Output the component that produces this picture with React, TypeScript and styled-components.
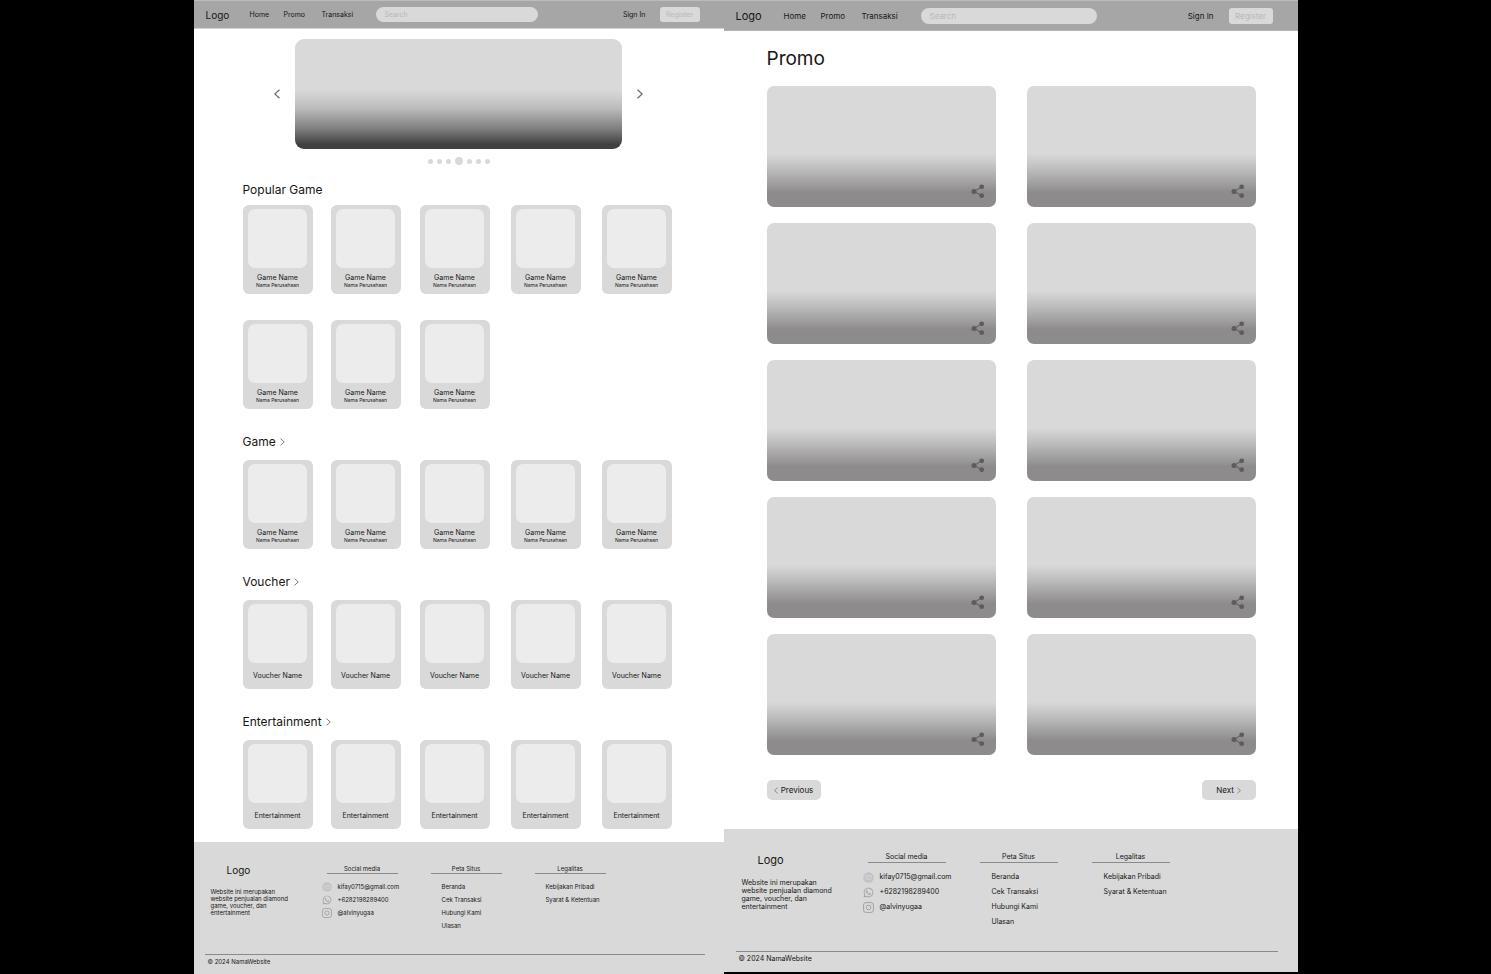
import React from "react";
import styled, { createGlobalStyle, ThemeProvider } from "styled-components";
import { FaWhatsapp } from "react-icons/fa";

const GlobalStyle = createGlobalStyle`
  *, *::before, *::after { box-sizing: border-box; }
  body { margin: 0; background: #000; color: #161616; font-family: Inter, "Liberation Sans", sans-serif; }
  h1, h2, h3, p, ul { margin: 0; padding: 0; font-weight: 400; }
  ul { list-style: none; }
  a { color: inherit; text-decoration: none; }
  button, input { font-family: inherit; border: 0; padding: 0; margin: 0; }
  button { cursor: pointer; }
`;

const compact = {
  header: { height: 29, edge: "#d2d2d2", left: 12, right: 24, logo: 10, text: 7, logoCol: 44, nav: "34px 38px 54px", control: 15, search: 162, inputPad: 9, button: 40, gap: 14 },
  footer: { top: 23, bottom: 9, left: 17, about: 116, pitch: 104, rule: 71, logo: 10, logoLine: 10, aboutGap: 13, text: 6, line: 7, row: 13, icon: 10, iconGap: 6, listGap: 9, indent: 11, bottomTop: 19, inset: 11, end: 19 },
};
const wide: typeof compact = {
  header: { height: 31, edge: "#b4b4b4", left: 12, right: 25, logo: 11, text: 8, logoCol: 48, nav: "37px 41px 59px", control: 16, search: 176, inputPad: 9, button: 44, gap: 15 },
  footer: { top: 24, bottom: 9, left: 18, about: 126, pitch: 112, rule: 78, logo: 11, logoLine: 14, aboutGap: 12, text: 7, line: 8, row: 15, icon: 11, iconGap: 6, listGap: 10, indent: 12, bottomTop: 18, inset: 12, end: 20 },
};
type Scale = typeof compact;
declare module "styled-components" {
  export interface DefaultTheme extends Scale {}
}

const Boards = styled.div`
  display: grid;
  grid-template-columns: 530fr 574fr;
  align-items: start;
  max-width: 1104px;
  margin: 0 auto;
`;
const Page = styled.div`
  background: #fff;
`;

/* Header */
const Header = styled.header`
  display: flex;
  align-items: center;
  height: ${(p) => p.theme.header.height}px;
  padding: 0 ${(p) => p.theme.header.right}px 0 ${(p) => p.theme.header.left}px;
  background: #a6a6a6;
  border-top: 1px solid #bcbcbc;
  border-bottom: 1px solid ${(p) => p.theme.header.edge};
  font-size: ${(p) => p.theme.header.text}px;
`;
const Brand = styled.a`
  width: ${(p) => p.theme.header.logoCol}px;
  font-size: ${(p) => p.theme.header.logo}px;
`;
const Nav = styled.nav`
  display: grid;
  grid-template-columns: ${(p) => p.theme.header.nav};
`;
const Search = styled.input`
  flex: 0 1 ${(p) => p.theme.header.search}px;
  min-width: 0;
  height: ${(p) => p.theme.header.control}px;
  padding: 0 ${(p) => p.theme.header.inputPad}px;
  border-radius: 8px;
  background: #d9d9d9;
  font-size: ${(p) => p.theme.header.text}px;
  &::placeholder { color: #b8b8b8; opacity: 1; }
`;
const Account = styled.div`
  display: flex;
  align-items: center;
  gap: ${(p) => p.theme.header.gap}px;
  margin-left: auto;
`;
const Register = styled.button`
  width: ${(p) => p.theme.header.button}px;
  height: ${(p) => p.theme.header.control}px;
  border-radius: 3px;
  background: #d9d9d9;
  color: #b8b8b8;
  font-size: ${(p) => p.theme.header.text}px;
`;

/* Carousel */
const Carousel = styled.section`
  display: flex;
  align-items: center;
  justify-content: center;
  gap: 15px;
  padding-top: 10px;
`;
const Slide = styled.div`
  flex: 0 1 327px;
  height: 110px;
  border-radius: 9px;
  background: linear-gradient(#d9d9d9 46%, #bcbcbc 63%, #7d7d7d 82%, #404040 96%);
`;
const IconButton = styled.button`
  display: flex;
  background: none;
  color: #666;
`;
const Dots = styled.div`
  display: flex;
  align-items: center;
  justify-content: center;
  gap: 4px;
  height: 8px;
  margin-top: 8px;
`;
const Dot = styled.button<{ $active: boolean }>`
  width: ${(p) => (p.$active ? 8 : 5)}px;
  height: ${(p) => (p.$active ? 8 : 5)}px;
  border-radius: 50%;
  background: #d9d9d9;
`;

/* Catalogue */
const Catalogue = styled.main`
  display: grid;
  gap: 25px;
  padding: 17px 52px 13px 49px;
`;
const SectionTitle = styled.h2<{ $gap: number }>`
  display: flex;
  align-items: center;
  gap: 4px;
  height: 16px;
  margin-bottom: ${(p) => p.$gap}px;
  font-size: 12px;
  line-height: 16px;
  svg { color: #777; }
`;
const CardGrid = styled.div`
  display: grid;
  grid-template-columns: 88fr 89fr 91fr 91fr 70fr;
  row-gap: 26px;
`;
const Card = styled.a`
  display: flex;
  flex-direction: column;
  align-items: center;
  width: 70px;
  height: 89px;
  padding-top: 4px;
  border-radius: 6px;
  background: #d9d9d9;
`;
const Thumb = styled.div`
  width: 59px;
  height: 59px;
  border-radius: 7px;
  background: #ececec;
`;
const CardName = styled.span<{ $alone: boolean }>`
  margin-top: ${(p) => (p.$alone ? 8 : 5)}px;
  font-size: 7px;
  line-height: 9px;
  white-space: nowrap;
`;
const CardMaker = styled.span`
  font-size: 5px;
  line-height: 6px;
`;

/* Promo */
const PromoMain = styled.main`
  padding: 16px 42px 29px 43px;
`;
const PromoTitle = styled.h1`
  margin-bottom: 15px;
  font-size: 19px;
  line-height: 24px;
`;
const PromoGrid = styled.div`
  display: grid;
  grid-template-columns: 1fr 1fr;
  gap: 16px 31px;
`;
const PromoCard = styled.article`
  display: flex;
  align-items: flex-end;
  justify-content: flex-end;
  height: 121px;
  padding: 0 11px 8px 0;
  border-radius: 7px;
  background: linear-gradient(#d9d9d9 56%, #bababa 70%, #8e8b8c 88%);
`;
const ShareButton = styled(IconButton)`
  color: #5c5c5c;
`;
const Pager = styled.nav`
  display: flex;
  justify-content: space-between;
  margin-top: 25px;
`;
const PagerButton = styled.button`
  display: flex;
  align-items: center;
  justify-content: center;
  gap: 3px;
  width: 54px;
  height: 20px;
  border-radius: 5px;
  background: #d9d9d9;
  color: #161616;
  font-size: 8px;
  svg { color: #777; }
`;

/* Footer */
const Footer = styled.footer`
  padding: ${(p) => p.theme.footer.top}px 0 ${(p) => p.theme.footer.bottom}px;
  background: #d9d9d9;
  font-size: ${(p) => p.theme.footer.text}px;
  line-height: ${(p) => p.theme.footer.line}px;
`;
const FooterColumns = styled.div`
  display: grid;
  grid-template-columns: ${(p) => `${p.theme.footer.about}px repeat(3, ${p.theme.footer.pitch}px)`};
  padding-left: ${(p) => p.theme.footer.left}px;
`;
const FooterLogo = styled.p`
  padding-left: 16px;
  margin-bottom: ${(p) => p.theme.footer.aboutGap}px;
  font-size: ${(p) => p.theme.footer.logo}px;
  line-height: ${(p) => p.theme.footer.logoLine}px;
`;
const About = styled.p`
  white-space: pre-line;
`;
const ColumnTitle = styled.h3`
  width: ${(p) => p.theme.footer.rule}px;
  padding-bottom: 1px;
  border-bottom: 1px solid #8a8a8a;
  font-size: inherit;
  text-align: center;
`;
const List = styled.ul<{ $indent: boolean }>`
  margin-top: ${(p) => p.theme.footer.listGap}px;
  padding-left: ${(p) => (p.$indent ? p.theme.footer.indent : 0)}px;
  margin-left: ${(p) => (p.$indent ? 0 : -5)}px;
`;
const Item = styled.li`
  height: ${(p) => p.theme.footer.row}px;
  a {
    display: inline-flex;
    align-items: center;
    gap: ${(p) => p.theme.footer.iconGap}px;
    height: ${(p) => p.theme.footer.line}px;
    white-space: nowrap;
  }
  svg {
    width: ${(p) => p.theme.footer.icon}px;
    height: ${(p) => p.theme.footer.icon}px;
    color: #a0a0a0;
  }
`;
const Copyright = styled.p`
  margin: ${(p) => p.theme.footer.bottomTop}px ${(p) => p.theme.footer.end}px 0 ${(p) => p.theme.footer.inset}px;
  padding: 3px 0 0 3px;
  border-top: 1px solid #8a8a8a;
`;

const Chevron = ({ left = false, w = 6, h = 10 }: { left?: boolean; w?: number; h?: number }) => (
  <svg width={w} height={h} viewBox="0 0 6 10" fill="none" stroke="currentColor" strokeWidth="1.2" aria-hidden="true">
    <path d={left ? "M5.5 .8 .8 5l4.7 4.2" : "M.5.8 5.2 5 .5 9.2"} />
  </svg>
);
const ShareIcon = () => (
  <svg width="14" height="15" viewBox="0 0 14 15" fill="currentColor" aria-hidden="true">
    <path d="M10.8 2.8 3 7.4l7.8 4.4" fill="none" stroke="currentColor" strokeWidth="1" />
    <circle cx="10.7" cy="2.8" r="2.4" />
    <circle cx="3" cy="7.4" r="2.5" />
    <circle cx="10.7" cy="11.7" r="2.4" />
  </svg>
);
const MailIcon = () => (
  <svg viewBox="0 0 20 20" aria-hidden="true">
    <circle cx="10" cy="10" r="9.5" fill="#c2c2c2" />
    <rect x="5" y="6.3" width="10" height="7.6" rx="1.2" fill="none" stroke="#dadada" strokeWidth="1.2" />
    <path d="m5.4 7.6 4.6 3.2 4.6-3.2" fill="none" stroke="#dadada" strokeWidth="1.2" />
  </svg>
);
const InstagramIcon = () => (
  <svg viewBox="0 0 20 20" fill="none" stroke="currentColor" strokeWidth="1.7" aria-hidden="true">
    <rect x="1" y="1" width="18" height="18" rx="4.5" />
    <circle cx="10" cy="10" r="4.2" />
    <circle cx="15" cy="5" r="0.7" fill="currentColor" stroke="none" />
  </svg>
);

const SiteHeader = () => (
  <Header>
    <Brand href="#">Logo</Brand>
    <Nav>
      <a href="#">Home</a>
      <a href="#">Promo</a>
      <a href="#">Transaksi</a>
    </Nav>
    <Search type="search" placeholder="Search" aria-label="Search" />
    <Account>
      <a href="#">Sign In</a>
      <Register type="button">Register</Register>
    </Account>
  </Header>
);

const columns = [
  {
    title: "Social media",
    items: [
      { text: "kifay0715@gmail.com", icon: <MailIcon /> },
      { text: "+6282198289400", icon: <FaWhatsapp /> },
      { text: "@alvinyugaa", icon: <InstagramIcon /> },
    ],
  },
  { title: "Peta Situs", items: [{ text: "Beranda" }, { text: "Cek Transaksi" }, { text: "Hubungi Kami" }, { text: "Ulasan" }] },
  { title: "Legalitas", items: [{ text: "Kebijakan Pribadi" }, { text: "Syarat & Ketentuan" }] },
] as { title: string; items: { text: string; icon?: React.ReactNode }[] }[];

const SiteFooter = () => (
  <Footer>
    <FooterColumns>
      <div>
        <FooterLogo>Logo</FooterLogo>
        <About>{"Website ini merupakan\nwebsite penjualan diamond\ngame, voucher, dan\nentertainment"}</About>
      </div>
      {columns.map((c) => (
        <div key={c.title}>
          <ColumnTitle>{c.title}</ColumnTitle>
          <List $indent={!c.items[0].icon}>
            {c.items.map((i) => (
              <Item key={i.text}>
                <a href="#">
                  {i.icon}
                  {i.text}
                </a>
              </Item>
            ))}
          </List>
        </div>
      ))}
    </FooterColumns>
    <Copyright>© 2024 NamaWebsite</Copyright>
  </Footer>
);

const sections = [
  { title: "Popular Game", name: "Game Name", maker: "Nama Perusahaan", count: 8, more: false },
  { title: "Game", name: "Game Name", maker: "Nama Perusahaan", count: 5, more: true },
  { title: "Voucher", name: "Voucher Name", maker: "", count: 5, more: true },
  { title: "Entertainment", name: "Entertainment", maker: "", count: 5, more: true },
];

const HomePage = () => (
  <Page>
    <SiteHeader />
    <Carousel aria-label="Banner">
      <IconButton type="button" aria-label="Previous banner"><Chevron left /></IconButton>
      <Slide />
      <IconButton type="button" aria-label="Next banner"><Chevron /></IconButton>
    </Carousel>
    <Dots>
      {[0, 1, 2, 3, 4, 5, 6].map((n) => (
        <Dot key={n} type="button" $active={n === 3} aria-label={`Banner ${n + 1}`} />
      ))}
    </Dots>
    <Catalogue>
      {sections.map((s) => (
        <section key={s.title}>
          <SectionTitle $gap={s.more ? 10 : 7}>
            {s.title}
            {s.more && <Chevron w={5} h={8} />}
          </SectionTitle>
          <CardGrid>
            {Array.from({ length: s.count }, (_, n) => (
              <Card key={n} href="#">
                <Thumb />
                <CardName $alone={!s.maker}>{s.name}</CardName>
                {s.maker && <CardMaker>{s.maker}</CardMaker>}
              </Card>
            ))}
          </CardGrid>
        </section>
      ))}
    </Catalogue>
    <SiteFooter />
  </Page>
);

const PromoPage = () => (
  <Page>
    <SiteHeader />
    <PromoMain>
      <PromoTitle>Promo</PromoTitle>
      <PromoGrid>
        {Array.from({ length: 10 }, (_, n) => (
          <PromoCard key={n}>
            <ShareButton type="button" aria-label="Share promo"><ShareIcon /></ShareButton>
          </PromoCard>
        ))}
      </PromoGrid>
      <Pager aria-label="Pages">
        <PagerButton type="button"><Chevron left w={4} h={7} />Previous</PagerButton>
        <PagerButton type="button">Next<Chevron w={4} h={7} /></PagerButton>
      </Pager>
    </PromoMain>
    <SiteFooter />
  </Page>
);

export default function App() {
  return (
    <>
      <GlobalStyle />
      <Boards>
        <ThemeProvider theme={compact}><HomePage /></ThemeProvider>
        <ThemeProvider theme={wide}><PromoPage /></ThemeProvider>
      </Boards>
    </>
  );
}
